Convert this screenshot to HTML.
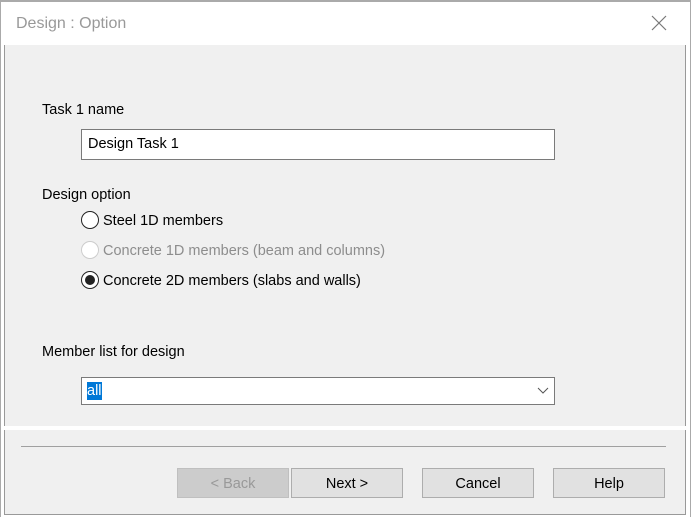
<!DOCTYPE html><html><head><style>
body{margin:0;width:691px;height:517px;background:#fff;font-family:"Liberation Sans",sans-serif;font-size:14px;color:#000;position:relative;overflow:hidden}
.a{position:absolute}
.btn{position:absolute;top:468px;height:28px;width:110px;border:1px solid #adadad;background:#e1e1e1;text-align:center;line-height:30px;font-size:14.5px}
.r{position:absolute;width:18px;height:18px;border-radius:50%;border:1.5px solid #222;background:#fff;box-sizing:border-box}
.t{font-size:14.5px}
</style></head><body>
<div class="a" style="left:0;top:0;width:691px;height:2px;background:#aaa"></div>
<div class="a" style="left:0;top:0;width:1px;height:517px;background:#aaa"></div>
<div class="a" style="left:690px;top:0;width:1px;height:517px;background:#aaa"></div>
<div class="a" style="left:16px;top:15px;font-size:16px;color:#999">Design : Option</div>
<svg class="a" style="left:651px;top:15px" width="16" height="16"><path d="M1 1L15 15M15 1L1 15" stroke="#777" stroke-width="1.2"/></svg>
<div class="a" style="left:4px;top:45px;width:682px;height:381px;background:#f0f0f0;border-left:1px solid #999;border-right:1px solid #999;box-sizing:border-box"></div>
<div class="a" style="left:4px;top:430px;width:682px;height:85px;background:#f0f0f0;border:1px solid #999;border-top:none;box-sizing:border-box"></div>
<div class="a t" style="left:42px;top:102px">Task 1 name</div>
<div class="a t" style="left:81px;top:129px;width:474px;height:31px;background:#fff;border:1px solid #7a7a7a;box-sizing:border-box;padding:6px 6px">Design Task 1</div>
<div class="a t" style="left:42px;top:187px">Design option</div>
<div class="r" style="left:81px;top:211px"></div><div class="a t" style="left:103px;top:213px">Steel 1D members</div>
<div class="r" style="left:81px;top:241px;border-color:#ccc"></div><div class="a t" style="left:103px;top:243px;color:#8d8d8d">Concrete 1D members (beam and columns)</div>
<div class="r" style="left:81px;top:271px"></div><div class="a" style="left:85px;top:275px;width:10px;height:10px;border-radius:50%;background:#222"></div><div class="a t" style="left:103px;top:273px">Concrete 2D members (slabs and walls)</div>
<div class="a t" style="left:42px;top:344px">Member list for design</div>
<div class="a" style="left:81px;top:377px;width:474px;height:28px;background:#fff;border:1px solid #7a7a7a;box-sizing:border-box"></div>
<div class="a t" style="left:87px;top:382px;height:18px;line-height:19px;background:#0078d7;color:#fff">all</div>
<svg class="a" style="left:537px;top:387px" width="12" height="8"><path d="M1 1L6 6L11 1" stroke="#555" fill="none"/></svg>
<div class="a" style="left:21px;top:446px;width:645px;height:1px;background:#a0a0a0"></div>
<div class="btn" style="left:177px;color:#999;background:#ccc;border-color:#bfbfbf">&lt; Back</div>
<div class="btn" style="left:291px">Next &gt;</div>
<div class="btn" style="left:422px">Cancel</div>
<div class="btn" style="left:553px">Help</div>
</body></html>
